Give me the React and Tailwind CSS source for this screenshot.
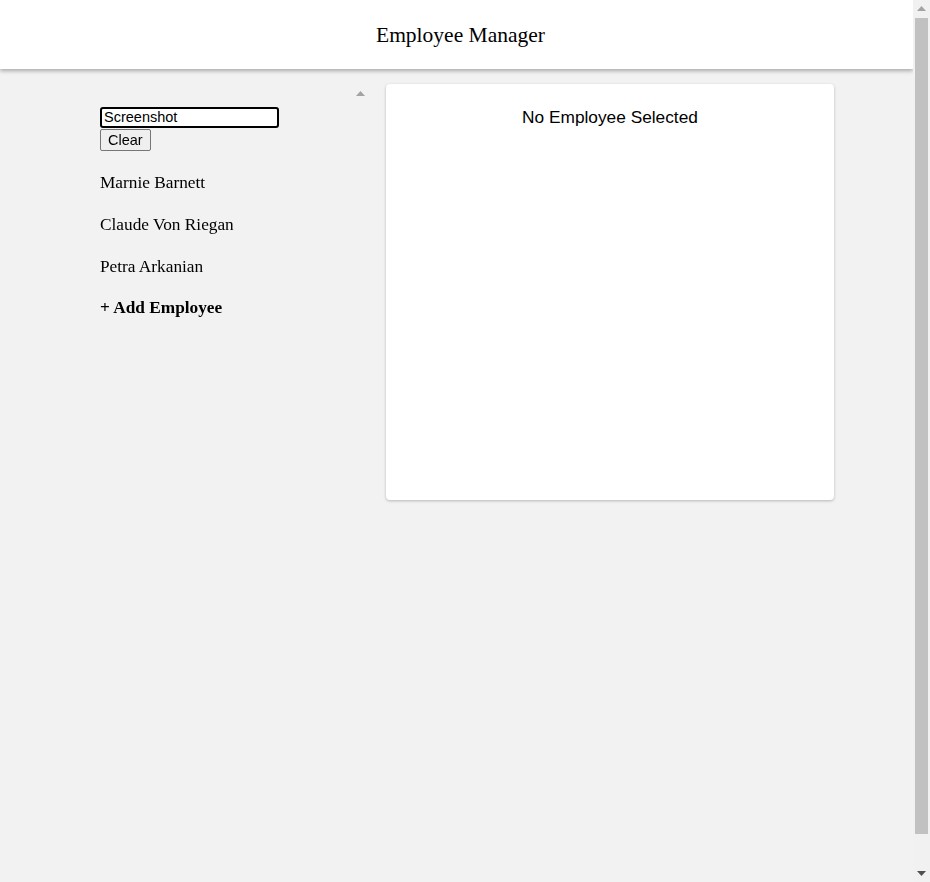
const Arrow = ({ up = true, color }) => (
  <svg width="9" height="5" viewBox="0 0 9 5" className="block">
    <path d={up ? "M4.5 0 L9 5 L0 5 Z" : "M0 0 L9 0 L4.5 5 Z"} fill={color} />
  </svg>
);

export default function App() {
  const employees = ["Marnie Barnett", "Claude Von Riegan", "Petra Arkanian"];

  return (
    <div className="flex h-screen overflow-hidden bg-[#f2f2f2] font-['Liberation_Serif',serif] text-black">
      <div className="min-w-0 flex-1">
        <header className="flex h-[69px] items-center justify-center bg-white pt-[2px] shadow-[0_2px_4px_rgba(0,0,0,0.3)]">
          <h1 className="pl-[8px] text-[21.5px] font-normal">Employee Manager</h1>
        </header>

        <main className="flex gap-[17px] pl-[83px] pt-[15px]">
          <aside className="flex h-[833px] w-[286px]">
            <div className="flex-1 pl-[17px] pt-[23px]">
              <input
                defaultValue="Screenshot"
                autoFocus
                className="block h-[21px] w-[179px] rounded-[3px] border-2 border-black bg-white px-[2px] pb-[1px] font-['Liberation_Sans',sans-serif] text-[14.5px] leading-none outline-none"
              />
              <button className="mt-[1px] block h-[22px] rounded-[2px] border border-[#767676] bg-[#efefef] px-[7px] font-['Liberation_Sans',sans-serif] text-[14.5px] leading-none text-black">
                Clear
              </button>
              <ul className="mt-[11px]">
                {employees.map((name) => (
                  <li key={name} className="flex h-[42px] items-center text-[17.3px]">
                    {name}
                  </li>
                ))}
                <li className="flex h-[40px] items-center text-[17.3px] font-bold">+ Add Employee</li>
              </ul>
            </div>
            <div className="flex w-[17px] justify-center pt-[7px]">
              <Arrow color="#a3a3a3" />
            </div>
          </aside>

          <section className="h-[416px] w-[448px] rounded-[4px] bg-white pt-[21px] text-center shadow-[0_1px_3px_rgba(0,0,0,0.25)]">
            <p className="font-['Liberation_Sans',sans-serif] text-[17.3px]">No Employee Selected</p>
          </section>
        </main>
      </div>

      <div className="flex w-[17px] flex-col bg-[#f1f1f1]">
        <div className="flex h-[17px] items-center justify-center">
          <Arrow color="#a3a3a3" />
        </div>
        <div className="flex-1 px-[2px] pb-[31px] pt-[1px]">
          <div className="h-full bg-[#c1c1c1]" />
        </div>
        <div className="flex h-[17px] items-center justify-center">
          <Arrow up={false} color="#505050" />
        </div>
      </div>
    </div>
  );
}
